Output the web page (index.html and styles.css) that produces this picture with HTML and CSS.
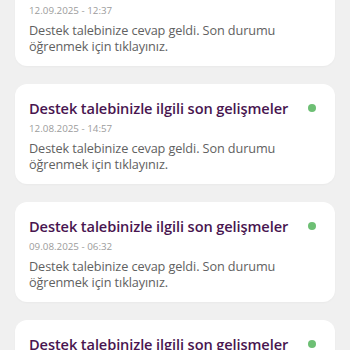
FILE: index.html
```html
<!DOCTYPE html>
<html lang="tr">
<head>
<meta charset="utf-8">
<link rel="stylesheet" href="styles.css">
</head>
<body>
<div class="list">
  <div class="card">
    <div class="head"><div class="title">Destek talebinizle ilgili son gelişmeler</div><span class="dot"></span></div>
    <div class="date">12.09.2025 - 12:37</div>
    <div class="body">Destek talebinize cevap geldi. Son durumu öğrenmek için tıklayınız.</div>
  </div>
  <div class="card">
    <div class="head"><div class="title">Destek talebinizle ilgili son gelişmeler</div><span class="dot"></span></div>
    <div class="date">12.08.2025 - 14:57</div>
    <div class="body">Destek talebinize cevap geldi. Son durumu öğrenmek için tıklayınız.</div>
  </div>
  <div class="card">
    <div class="head"><div class="title">Destek talebinizle ilgili son gelişmeler</div><span class="dot"></span></div>
    <div class="date">09.08.2025 - 06:32</div>
    <div class="body">Destek talebinize cevap geldi. Son durumu öğrenmek için tıklayınız.</div>
  </div>
  <div class="card">
    <div class="head"><div class="title">Destek talebinizle ilgili son gelişmeler</div><span class="dot"></span></div>
    <div class="date">05.08.2025 - 10:14</div>
    <div class="body">Destek talebinize cevap geldi. Son durumu öğrenmek için tıklayınız.</div>
  </div>
</div>
</body>
</html>
```
FILE: styles.css
```css
html, body {
  margin: 0;
  padding: 0;
  background: #f0f0f0;
  overflow: hidden;
  height: 350px;
}
.list {
  display: flex;
  flex-direction: column;
  gap: 18px;
  padding: 0 15px 0 15px;
  margin-top: -34px;
  font-family: "Open Sans", sans-serif;
}
.card {
  background: #ffffff;
  border-radius: 12px;
  padding: 12px 14px 12px 14px;
  box-shadow: 0 1px 2px rgba(0,0,0,0.03);
}
.head {
  display: flex;
  align-items: center;
  justify-content: space-between;
}
.title {
  font-size: 14.6px;
  font-weight: 600;
  letter-spacing: -0.1px;
  line-height: 24px;
  color: #481550;
  white-space: nowrap;
}
.dot {
  width: 8px;
  height: 8px;
  border-radius: 50%;
  background: #6dbf74;
  margin-right: 5px;
}
.date {
  font-size: 9.8px;
  line-height: 16px;
  color: #9c9c9c;
  margin-top: 1px;
}
.body {
  font-size: 12.7px;
  letter-spacing: -0.1px;
  line-height: 16px;
  color: #616161;
  margin-top: 3px;
  padding-right: 20px;
}
```
